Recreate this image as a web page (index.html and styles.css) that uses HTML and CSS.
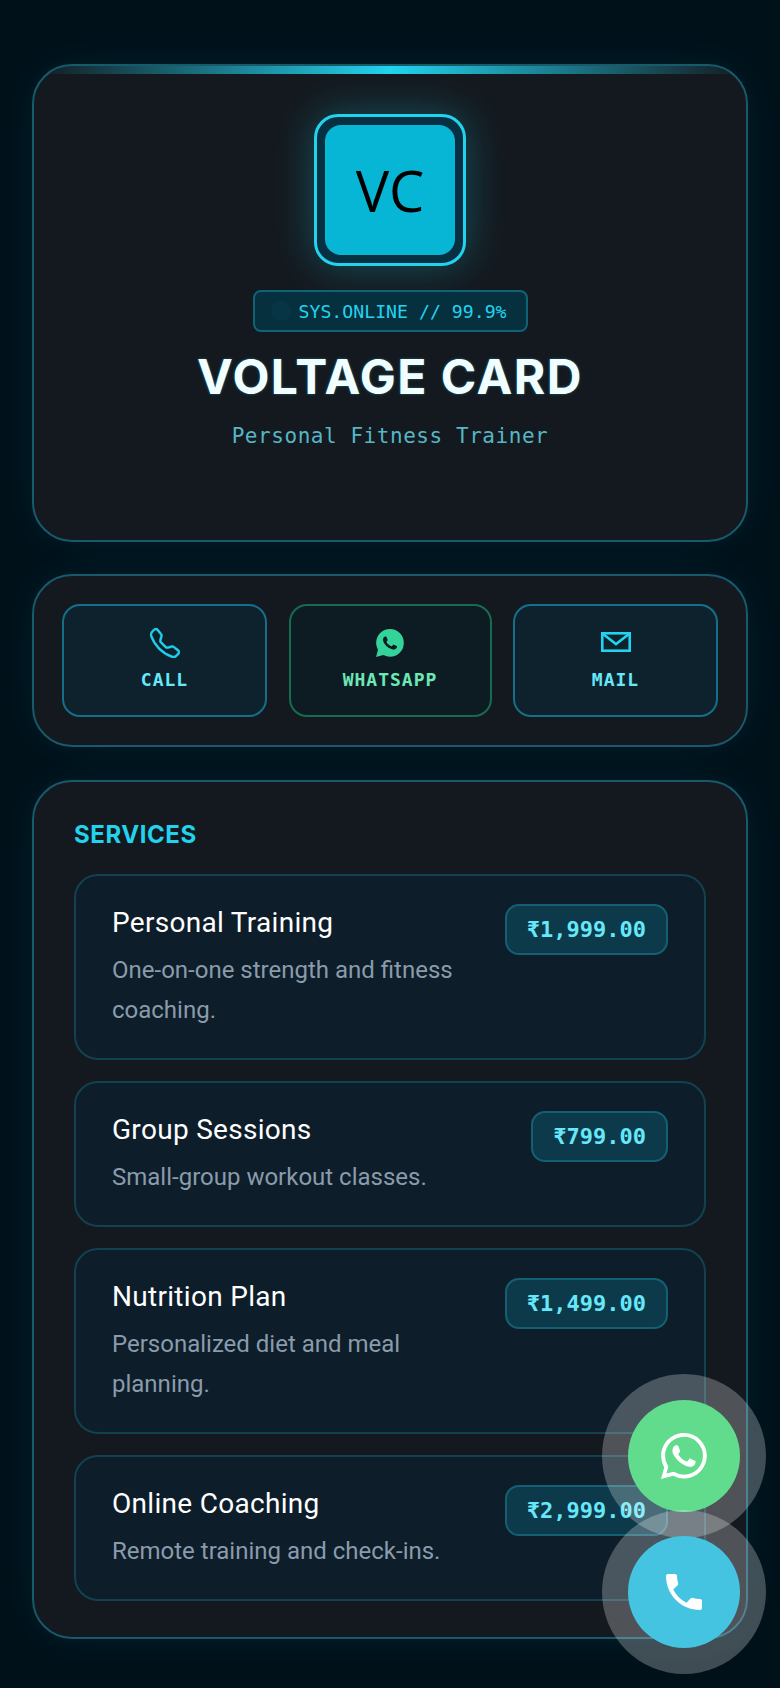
FILE: index.html
```html
<!DOCTYPE html>
<html lang="en">
<head>
    <meta charset="UTF-8">
    <meta name="viewport" content="width=device-width, initial-scale=1.0">
    <title>Voltage Card</title>
    <link rel="stylesheet" href="styles.css">
</head>
<body>
    <section class="card hero">
        <div class="avatar"><div class="avatar-inner">VC</div></div>
        <div class="status"><span class="status-dot"></span>SYS.ONLINE // 99.9%</div>
        <h1>VOLTAGE CARD</h1>
        <p class="role">Personal Fitness Trainer</p>
    </section>

    <section class="card actions">
        <a class="action" href="#">
            <svg class="action-icon" viewBox="0 0 16 16" fill="#22d3ee"><path d="M3.654 1.328a.678.678 0 0 0-1.015-.063L1.605 2.3c-.483.484-.661 1.169-.45 1.77a17.568 17.568 0 0 0 4.168 6.608 17.569 17.569 0 0 0 6.608 4.168c.601.211 1.286.033 1.77-.45l1.034-1.034a.678.678 0 0 0-.063-1.015l-2.307-1.794a.678.678 0 0 0-.58-.122l-2.19.547a1.745 1.745 0 0 1-1.657-.459L5.482 8.062a1.745 1.745 0 0 1-.46-1.657l.548-2.19a.678.678 0 0 0-.122-.58L3.654 1.328zM1.884.511a1.745 1.745 0 0 1 2.612.163L6.29 2.98c.329.423.445.974.315 1.494l-.547 2.19a.678.678 0 0 0 .178.643l2.457 2.457a.678.678 0 0 0 .644.178l2.189-.547a1.745 1.745 0 0 1 1.494.315l2.306 1.794c.829.645.905 1.87.163 2.611l-1.034 1.034c-.74.74-1.846 1.065-2.877.702a18.634 18.634 0 0 1-7.01-4.42 18.634 18.634 0 0 1-4.42-7.009c-.362-1.03-.037-2.137.703-2.877L1.885.511z" stroke="#22d3ee" stroke-width="0.25"/></svg>
            CALL
        </a>
        <a class="action action-green" href="#">
            <svg class="action-icon" viewBox="-0.6 -0.6 17.2 17.2"><path fill="#34d399" d="M13.601 2.326A7.854 7.854 0 0 0 7.994 0C3.627 0 .068 3.558.064 7.926c0 1.399.366 2.76 1.057 3.965L0 16l4.204-1.102a7.933 7.933 0 0 0 3.79.965h.004c4.368 0 7.926-3.558 7.93-7.93A7.898 7.898 0 0 0 13.6 2.326z"/><path fill="#0c1c22" d="M11.609 9.587c-.197-.099-1.17-.578-1.353-.646-.182-.065-.315-.099-.445.099-.133.197-.513.646-.627.775-.114.133-.232.148-.43.05-.197-.1-.836-.308-1.592-.985-.59-.525-.985-1.175-1.103-1.372-.114-.198-.011-.304.088-.403.087-.088.197-.232.296-.346.1-.114.133-.198.198-.33.065-.134.034-.248-.015-.347-.05-.099-.445-1.076-.612-1.47-.16-.389-.323-.335-.445-.34-.114-.007-.247-.007-.38-.007a.729.729 0 0 0-.529.247c-.182.198-.691.677-.691 1.654 0 .977.71 1.916.81 2.049.098.133 1.394 2.132 3.383 2.992.47.205.84.326 1.129.418.475.152.904.129 1.246.08.38-.058 1.171-.48 1.338-.943.164-.464.164-.86.114-.943-.049-.084-.182-.133-.38-.232z"/></svg>
            WHATSAPP
        </a>
        <a class="action" href="#">
            <svg class="action-icon" viewBox="0 0 30 30" fill="none" stroke="#22d3ee" stroke-width="2.6"><rect x="1.3" y="5.3" width="27.4" height="17.4"/><path d="M2 6l13 10L28 6"/></svg>
            MAIL
        </a>
    </section>

    <section class="card services">
        <h2>SERVICES</h2>
        <div class="service">
            <div class="service-info">
                <h3>Personal Training</h3>
                <p>One-on-one strength and fitness coaching.</p>
            </div>
            <span class="price">₹1,999.00</span>
        </div>
        <div class="service">
            <div class="service-info">
                <h3>Group Sessions</h3>
                <p>Small-group workout classes.</p>
            </div>
            <span class="price">₹799.00</span>
        </div>
        <div class="service">
            <div class="service-info">
                <h3>Nutrition Plan</h3>
                <p>Personalized diet and meal planning.</p>
            </div>
            <span class="price">₹1,499.00</span>
        </div>
        <div class="service">
            <div class="service-info">
                <h3>Online Coaching</h3>
                <p>Remote training and check-ins.</p>
            </div>
            <span class="price">₹2,999.00</span>
        </div>
    </section>

    <a class="fab fab-whatsapp" href="#">
        <svg viewBox="0 0 16 16" fill="#fff"><path d="M13.601 2.326A7.854 7.854 0 0 0 7.994 0C3.627 0 .068 3.558.064 7.926c0 1.399.366 2.76 1.057 3.965L0 16l4.204-1.102a7.933 7.933 0 0 0 3.79.965h.004c4.368 0 7.926-3.558 7.93-7.93A7.898 7.898 0 0 0 13.6 2.326zM7.994 14.521a6.573 6.573 0 0 1-3.356-.92l-.24-.144-2.494.654.666-2.433-.156-.251a6.56 6.56 0 0 1-1.007-3.505c0-3.626 2.957-6.584 6.591-6.584a6.56 6.56 0 0 1 4.66 1.931 6.557 6.557 0 0 1 1.928 4.66c-.004 3.639-2.961 6.592-6.592 6.592zm3.615-4.934c-.197-.099-1.17-.578-1.353-.646-.182-.065-.315-.099-.445.099-.133.197-.513.646-.627.775-.114.133-.232.148-.43.05-.197-.1-.836-.308-1.592-.985-.59-.525-.985-1.175-1.103-1.372-.114-.198-.011-.304.088-.403.087-.088.197-.232.296-.346.1-.114.133-.198.198-.33.065-.134.034-.248-.015-.347-.05-.099-.445-1.076-.612-1.47-.16-.389-.323-.335-.445-.34-.114-.007-.247-.007-.38-.007a.729.729 0 0 0-.529.247c-.182.198-.691.677-.691 1.654 0 .977.71 1.916.81 2.049.098.133 1.394 2.132 3.383 2.992.47.205.84.326 1.129.418.475.152.904.129 1.246.08.38-.058 1.171-.48 1.338-.943.164-.464.164-.86.114-.943-.049-.084-.182-.133-.38-.232z"/></svg>
    </a>
    <a class="fab fab-call" href="#">
        <svg viewBox="0 0 24 24" fill="#fff"><path d="M6.62 10.79c1.44 2.83 3.76 5.14 6.59 6.59l2.2-2.2c.27-.27.67-.36 1.02-.24 1.12.37 2.33.57 3.57.57.55 0 1 .45 1 1V20c0 .55-.45 1-1 1-9.39 0-17-7.61-17-17 0-.55.45-1 1-1h3.5c.55 0 1 .45 1 1 0 1.25.2 2.45.57 3.57.11.35.03.74-.25 1.02l-2.2 2.2z"/></svg>
    </a>
</body>
</html>
```

FILE: styles.css
```css
html, body {
    height: 100%;
}
body {
    margin: 0;
    padding: 64px 32px 0;
    box-sizing: border-box;
    overflow: hidden;
    background: #01111a;
    color: #fff;
    font-family: 'Roboto', sans-serif;
}
a {
    text-decoration: none;
}
.card {
    position: relative;
    overflow: hidden;
    box-sizing: border-box;
    background: #14191f;
    border: 2px solid #165a6c;
    border-radius: 40px;
    box-shadow: 0 0 40px rgba(34, 211, 238, 0.07);
}
.hero {
    height: 478px;
    margin-bottom: 32px;
    padding-top: 48px;
    text-align: center;
}
.hero::before {
    content: "";
    position: absolute;
    top: 0;
    left: 0;
    right: 0;
    height: 8px;
    background: linear-gradient(90deg, transparent, #22d3ee, transparent);
}
.avatar {
    width: 152px;
    height: 152px;
    box-sizing: border-box;
    margin: 0 auto;
    padding: 8px;
    background: #073042;
    border: 3px solid #22d3ee;
    border-radius: 24px;
    box-shadow: 0 0 40px rgba(34, 211, 238, 0.3);
}
.avatar-inner {
    display: flex;
    align-items: center;
    justify-content: center;
    height: 100%;
    background: #06b6d4;
    border-radius: 16px;
    color: #000;
    font-family: 'Open Sans', sans-serif;
    font-size: 56px;
}
.status {
    display: flex;
    align-items: center;
    width: 275px;
    height: 42px;
    box-sizing: border-box;
    margin: 24px auto 0;
    padding-left: 16px;
    background: #07303f;
    border: 2px solid #0f6377;
    border-radius: 8px;
    color: #22d3ee;
    font-family: 'DejaVu Sans Mono', monospace;
    font-size: 18.2px;
}
.status-dot {
    width: 20px;
    height: 20px;
    margin-right: 8px;
    border-radius: 50%;
    background: #083545;
}
h1 {
    margin: 16px 0 0;
    font-family: 'Inter', sans-serif;
    font-size: 48px;
    font-weight: 700;
    line-height: 58px;
    letter-spacing: 1.5px;
    color: #f0feff;
    text-shadow: 0 0 3px rgba(34, 211, 238, 0.4);
}
.role {
    margin: 18px 0 0;
    font-family: 'DejaVu Sans Mono', monospace;
    font-size: 21px;
    letter-spacing: 0.55px;
    color: #56b6c6;
}
.actions {
    display: grid;
    grid-template-columns: 205px 203px 205px;
    justify-content: space-between;
    height: 173px;
    margin-bottom: 33px;
    padding: 28px;
}
.action {
    display: flex;
    flex-direction: column;
    align-items: center;
    gap: 11px;
    height: 113px;
    box-sizing: border-box;
    padding-top: 22px;
    background: #0e222d;
    border: 2px solid #146f8a;
    border-radius: 18px;
    color: #67e8f9;
    font-family: 'DejaVu Sans Mono', monospace;
    font-size: 18px;
    font-weight: 700;
    letter-spacing: 1px;
}
.action-green {
    background: #0c1c22;
    border-color: #166c50;
    color: #6ee7b7;
}
.action-icon {
    width: 30px;
    height: 30px;
}
.services {
    padding: 39px 40px 36px;
}
h2 {
    margin: 0 0 25px;
    font-family: 'Inter', sans-serif;
    font-size: 24px;
    font-weight: 700;
    line-height: 28px;
    letter-spacing: 0.55px;
    color: #22d3ee;
}
.service {
    display: flex;
    align-items: flex-start;
    justify-content: space-between;
    gap: 24px;
    box-sizing: border-box;
    margin-bottom: 21px;
    padding: 28px 36px 28px;
    background: #0d1d2a;
    border: 2px solid #124250;
    border-radius: 24px;
}
.service:last-child {
    margin-bottom: 0;
}
.service-info {
    flex: 1;
    margin-top: 1px;
}
h3 {
    margin: 0 0 9px;
    font-size: 28px;
    font-weight: 400;
    line-height: 36px;
    letter-spacing: 0.3px;
    color: #fff;
}
.service p {
    margin: 0;
    max-width: 360px;
    font-size: 24px;
    line-height: 40px;
    color: #8a9bab;
}
.price {
    flex: none;
    box-sizing: border-box;
    height: 51px;
    padding: 0 20px;
    background: #0c3a4b;
    border: 2px solid #146072;
    border-radius: 14px;
    font-family: 'DejaVu Sans Mono', monospace;
    font-size: 22px;
    font-weight: 700;
    line-height: 47px;
    color: #67e8f9;
}
.fab {
    position: fixed;
    right: 40px;
    display: flex;
    align-items: center;
    justify-content: center;
    width: 112px;
    height: 112px;
    border-radius: 50%;
    box-shadow: 0 0 0 26px rgba(255, 255, 255, 0.25);
}
.fab-whatsapp {
    top: 1400px;
    background: #60dc8c;
}
.fab-whatsapp svg {
    width: 46px;
    height: 46px;
}
.fab-call {
    top: 1536px;
    background: #44c4e0;
}
.fab-call svg {
    width: 48px;
    height: 48px;
}
```
